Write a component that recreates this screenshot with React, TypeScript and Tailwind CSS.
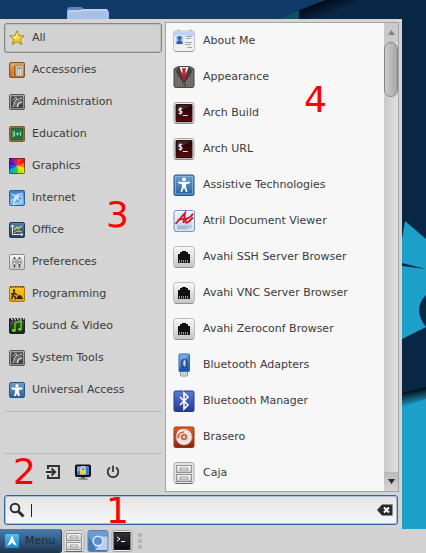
import React from "react";

type Item = { name: string; icon: React.ReactNode };

/* Shared gradients, referenced by every icon on the page. */
function Gradients() {
  const defs: [string, string, string][] = [
    ["gWood", "#d9a266", "#a86f35"],
    ["gSteel", "#8e8e8e", "#3a3a3a"],
    ["gBlue", "#6d9fd2", "#2a5f9a"],
    ["gSky", "#3a7fc4", "#7fbcf0"],
    ["gNavy", "#5c7fa6", "#243e60"],
    ["gLight", "#fafafa", "#c4c4c4"],
    ["gAmber", "#ffc928", "#e39a05"],
    ["gDark", "#555555", "#1c1c1c"],
    ["gStar", "#fff37a", "#e3bd12"],
    ["gRed", "#1c0606", "#5a0a10"],
    ["gBt", "#5a7bd8", "#223a92"],
    ["gOrange", "#e0602a", "#8c2410"],
    ["gUsb", "#5b9be8", "#1450a8"],
    ["gPaper", "#eef4ff", "#b4cbe8"],
    ["gChrome", "#6f9fd8", "#3d73b3"],
    ["gArch", "#55bfea", "#1a86c0"],
    ["gTerm", "#37323e", "#0c0a10"],
  ];
  return (
    <svg className="absolute size-0" aria-hidden="true">
      <defs>
        {defs.map(([id, a, b]) => (
          <linearGradient key={id} id={id} x1="0" y1="0" x2="0" y2="1">
            <stop offset="0" stopColor={a} />
            <stop offset="1" stopColor={b} />
          </linearGradient>
        ))}
      </defs>
    </svg>
  );
}

function Small({ children }: { children: React.ReactNode }) {
  return <svg viewBox="0 0 16 16" className="size-4 shrink-0" aria-hidden="true">{children}</svg>;
}
function Large({ children }: { children: React.ReactNode }) {
  return <svg viewBox="0 0 24 24" className="size-6 shrink-0" aria-hidden="true">{children}</svg>;
}

const Gear = () => (
  <Small>
    <rect x=".5" y=".5" width="15" height="15" rx="1.5" fill="url(#gSteel)" stroke="#5a5a5a" />
    <rect x="1.5" y="1.5" width="13" height="13" fill="none" stroke="#b5b5b5" strokeWidth=".7" />
    <rect x="2.5" y="2.5" width="11" height="11" fill="#3a3a3a" />
    <path d="M13 13V6l-1.500-1.500L10 5.500 8.500 4 7 5l.5 1.500L6 8 4.500 7.500 4 9l1 1-.5 2-1 .5V13z" fill="#6d6d6d" />
    <path d="M13 4.500 10.500 4 9 5.500 7 5 6.500 7 5 8l.5 2L4 11.500V13M3.500 6.500 6 3.500l2 .3" fill="none" stroke="#cfcfcf" />
    <path d="M13 8a4.500 4.500 0 0 0-4.500 5" fill="none" stroke="#dadada" strokeWidth="1.200" />
    <circle cx="11.500" cy="11.500" r="1.200" fill="#2a2a2a" />
  </Small>
);

const categories: Item[] = [
  {
    name: "All",
    icon: (
      <Small>
        <path d="m8 .8 2.100 5h5.200l-4.100 3.500 1.500 5.300L8 11.600l-4.700 3 1.500-5.300L.7 5.800h5.200z" fill="url(#gStar)" stroke="#aa8a12" strokeLinejoin="round" />
        <path d="M8 3 7 7 3.500 7 7 9z" fill="#fffcc8" />
      </Small>
    ),
  },
  {
    name: "Accessories",
    icon: (
      <Small>
        <rect x=".5" y=".5" width="15" height="15" rx="1.500" fill="url(#gWood)" stroke="#875523" />
        <path d="M3 4h2v10H3z" fill="#f58613" />
        <path d="M3 4 4 1.500 5 4z" fill="#f8dfb4" />
        <path d="M5.500 3v11" stroke="#8c5421" strokeWidth=".7" />
        <rect x="7" y="4" width="7" height="10" fill="#e2e2dc" stroke="#8d8d80" strokeWidth=".6" />
        <path d="M8 5h5v2.500H8z" fill="#8dad97" />
        <path d="M8 9h5M8 11h5M8 13h5" stroke="#888" strokeDasharray="1 1" />
      </Small>
    ),
  },
  { name: "Administration", icon: <Gear /> },
  {
    name: "Education",
    icon: (
      <Small>
        <rect x=".5" y=".5" width="15" height="15" rx="1" fill="#c58342" stroke="#8c5420" />
        <rect x="2" y="2" width="12" height="12" fill="#277049" stroke="#174e31" strokeWidth=".7" />
        <path d="M3 6h2.500v4H3M3.500 8h2M7 8h3M8.500 6.500v3M11.500 10V6l-.8.7" fill="none" stroke="#a5eda0" strokeWidth=".9" />
      </Small>
    ),
  },
  {
    name: "Graphics",
    icon: (
      <Small>
        <path d="M8 8V0h5z" fill="#fb3417" />
        <path d="m8 8 5-8h3v5z" fill="#f11a06" />
        <path d="m8 8 8-3v5z" fill="#f57a00" />
        <path d="m8 8 8 2v6z" fill="#ffde00" />
        <path d="m8 8 8 8H9z" fill="#b2e900" />
        <path d="m8 8 1 8H4z" fill="#21c532" />
        <path d="m8 8-4 8H0v-4z" fill="#0caeaa" />
        <path d="m8 8-8 4V7z" fill="#0a4df1" />
        <path d="M8 8 0 7V2z" fill="#3313ba" />
        <path d="M8 8 0 2V0h4z" fill="#760b98" />
        <path d="M8 8 4 0h4z" fill="#d80b65" />
        <rect x=".5" y=".5" width="15" height="15" rx="1" fill="none" stroke="#322038" strokeOpacity=".6" />
      </Small>
    ),
  },
  {
    name: "Internet",
    icon: (
      <Small>
        <rect x=".5" y=".5" width="15" height="15" rx="1.500" fill="url(#gSky)" stroke="#2563a5" />
        <path d="M2 3.500 7 7l6-4M7 7l-3 8M7 7l6 5M2 11l5-4 6-1M4 15l9-3M13 3v9" fill="none" stroke="#e9f5ff" strokeWidth=".8" />
        <path d="m2 3 3 2 3-1 4-1-3 3 1 3-3 1-2 4-1-4 2-3z" fill="#e3f2ff" fillOpacity=".65" />
      </Small>
    ),
  },
  {
    name: "Office",
    icon: (
      <Small>
        <rect x=".5" y=".5" width="15" height="15" rx="1.500" fill="url(#gNavy)" stroke="#213a59" />
        <path d="M3.500 3v9.500H14M2 5l1.500-2L5 5M12 11l2 1.500-2 1.500" fill="none" stroke="#dce7f2" />
        <path d="m5 8 3-3 2 1 3-2" fill="none" stroke="#b6e83c" strokeWidth="1.200" />
        <path d="m5 11 3-2 2 1 3-1M8 6l3 4" fill="none" stroke="#f3bd22" />
      </Small>
    ),
  },
  {
    name: "Preferences",
    icon: (
      <Small>
        <rect x=".5" y=".5" width="15" height="15" rx="1.500" fill="url(#gLight)" stroke="#8c8c8c" />
        <path d="M5.500 3v10.500M10.500 3v10.500" stroke="#333" strokeWidth="1.300" />
        <rect x="4" y="5" width="3" height="6" rx="1" fill="#fff" stroke="#555" strokeWidth=".8" />
        <rect x="9" y="4.500" width="3" height="6" rx="1" fill="#eee" stroke="#555" strokeWidth=".8" />
        <path d="M4 8h3M9 8h3" stroke="#777" />
      </Small>
    ),
  },
  {
    name: "Programming",
    icon: (
      <Small>
        <rect x=".5" y=".5" width="15" height="15" rx="1.500" fill="url(#gAmber)" stroke="#b2780b" />
        <path d="M1 1h14" stroke="#57400a" strokeWidth="1.500" strokeDasharray="1.500 1" />
        <circle cx="5" cy="4.500" r="1.200" fill="#252014" />
        <path d="m4.500 6 2 2 2 1M5 6 4 9.500 2.500 13M4 9.500l2 1 .5 3M3 7v2" fill="none" stroke="#252014" strokeWidth="1.300" />
        <path d="m7 13 1-2 2-2 2 .5 2 3.500z" fill="#252014" />
      </Small>
    ),
  },
  {
    name: "Sound & Video",
    icon: (
      <Small>
        <rect x=".5" y=".5" width="15" height="15" rx="1.500" fill="url(#gDark)" stroke="#202020" />
        <path d="M.5 0h15v3H.5z" fill="#151515" />
        <path d="m2 0 2 2.500M5 0l2 2.500M8 0l2 2.500M11 0l2 2.500M14 0l1 1.500" stroke="#eee" strokeWidth="1.200" />
        <path d="M6 12V5l6-2v8" fill="none" stroke="#4ee513" strokeWidth="1.300" />
        <ellipse cx="4.800" cy="12.300" rx="2" ry="1.600" fill="#4ee513" />
        <ellipse cx="10.800" cy="11.200" rx="1.800" ry="1.500" fill="#4ee513" />
      </Small>
    ),
  },
  { name: "System Tools", icon: <Gear /> },
  {
    name: "Universal Access",
    icon: (
      <Small>
        <rect x=".5" y=".5" width="15" height="15" rx="1.500" fill="url(#gBlue)" stroke="#275687" />
        <circle cx="8" cy="3.700" r="1.600" fill="#fff" />
        <path d="M2.500 5.500h11v1.700L10 8v2l1 4H9l-1-3-1 3H5l1-4V8l-3.500-.8z" fill="#fff" />
      </Small>
    ),
  },
];

const ArchTerminal = () => (
  <Large>
    <rect x="2" y="1.500" width="20" height="21" rx="2.500" fill="#eeeeec" stroke="#a3a3a0" />
    <path d="M3 22h18" stroke="#777" />
    <rect x="4" y="3.500" width="16" height="17" rx=".5" fill="url(#gRed)" stroke="#2b0b0d" />
    <path d="M5 4h14L5 12z" fill="#fff" fillOpacity=".12" />
    <text x="6" y="13" fill="#fff" fontSize="8" fontWeight="bold" fontFamily="DejaVu Sans Mono, monospace">$_</text>
  </Large>
);

const Ethernet = () => (
  <Large>
    <rect x="1.500" y="1.500" width="21" height="21" rx="3" fill="url(#gLight)" stroke="#bcbcbc" />
    <path d="M3 22.500h18" stroke="#929292" />
    <path d="M6 18V9h2V7h2V6h4v1h2v2h2v9z" fill="#111" />
    <path d="M7.500 15v2.500M9.500 15v2.500M11.500 15v2.500M13.500 15v2.500M15.500 15v2.500" stroke="#d9ae1c" strokeWidth=".9" />
  </Large>
);

const Cabinet = () => (
  <Large>
    <rect x="2" y="1.500" width="20" height="21" rx="3" fill="#e4e4e2" stroke="#aaa" />
    <path d="M3.500 22.500h17" stroke="#666" />
    <rect x="4.500" y="4.500" width="15" height="7" fill="url(#gLight)" stroke="#929292" />
    <rect x="4.500" y="13.500" width="15" height="7" fill="url(#gLight)" stroke="#929292" />
    <rect x="8.500" y="7" width="7" height="2" fill="#fff" stroke="#8a8a8a" strokeWidth=".8" />
    <rect x="8.500" y="16" width="7" height="2" fill="#fff" stroke="#8a8a8a" strokeWidth=".8" />
  </Large>
);

const apps: Item[] = [
  {
    name: "About Me",
    icon: (
      <Large>
        <rect x="1.500" y="2" width="21" height="20.500" rx="2.500" fill="#f0f0f0" stroke="#c3c3c3" />
        <path d="M2 3h20v4H2z" fill="#bdd4f6" />
        <path d="M3 22.500h18" stroke="#999" />
        <path d="M5 1.500h3M17 1.500h3" stroke="#b8b8b8" strokeWidth="1.500" />
        <rect x="3.500" y="6.500" width="8" height="9" fill="#a9c8ef" stroke="#dbe7f6" />
        <circle cx="7.500" cy="9" r="2" fill="#335d9d" />
        <path d="M4.500 15c0-5 6-5 6 0z" fill="#2f5c9f" />
        <path d="M14 7.500h6M14 9.500h5M13 13.500h7M13 15.500h6M15 18.500h5" stroke="#9b9b9b" strokeWidth=".9" />
      </Large>
    ),
  },
  {
    name: "Appearance",
    icon: (
      <Large>
        <path d="M2 4q2-2 5-2.500h10Q20 2 22 4v17q0 1.500-2 1.500H4Q2 22.500 2 21z" fill="#66615f" stroke="#4c4846" />
        <path d="M4 5v17M6.500 7v15M9 12v10M15 12v10M17.500 7v15M20 5v17" stroke="#928c88" strokeWidth=".7" />
        <path d="M7 2h10l-5 13z" fill="#f4f4f4" />
        <path d="m7 2-3 5 3 1-1 2 6 8 6-8-1-2 3-1-3-5-5 13z" fill="#49413f" stroke="#2c2625" strokeWidth=".6" />
        <path d="m10 2.500 2 1 2-1-.5 3 .5 6-2 4-2-4 .5-6z" fill="#cb1d28" />
        <circle cx="13" cy="20" r=".8" fill="#292423" />
      </Large>
    ),
  },
  { name: "Arch Build", icon: <ArchTerminal /> },
  { name: "Arch URL", icon: <ArchTerminal /> },
  {
    name: "Assistive Technologies",
    icon: (
      <Large>
        <rect x="2" y="2" width="20" height="20.500" rx="1.500" fill="url(#gBlue)" stroke="#285886" />
        <rect x="3.500" y="3.500" width="17" height="17.500" fill="none" stroke="#8fb5d8" strokeWidth=".8" />
        <circle cx="12" cy="6.500" r="2" fill="#fff" />
        <path d="M6.500 8.500 10 9h4l3.500-.5.5 1.500-4 1.500v2.500l1.500 5H14l-2-4.500L10 19H8.500l1.500-5v-2.500L6 10z" fill="#fff" />
      </Large>
    ),
  },
  {
    name: "Atril Document Viewer",
    icon: (
      <Large>
        <rect x="2" y="1.500" width="20.500" height="21" rx="2" fill="url(#gPaper)" stroke="#7299c8" />
        <path d="M4 3h17v18H4z" fill="none" stroke="#fff" strokeWidth=".8" />
        <path d="M5 17.500h14M5 19.500h10" stroke="#a3b2c9" strokeWidth="1.300" />
        <path d="M3.500 15 13 4l-1.500 10M6 11c4-2 11 1 15-6.500M14.500 9.500c-2 5 0 5 2.500 3l4-4" fill="none" stroke="#d21525" strokeWidth="1.800" />
      </Large>
    ),
  },
  { name: "Avahi SSH Server Browser", icon: <Ethernet /> },
  { name: "Avahi VNC Server Browser", icon: <Ethernet /> },
  { name: "Avahi Zeroconf Browser", icon: <Ethernet /> },
  {
    name: "Bluetooth Adapters",
    icon: (
      <Large>
        <rect x="8.500" y="18" width="7" height="5" rx="1" fill="#e2e2df" stroke="#8d8d8a" />
        <path d="M10.500 20.500h1M13 20.500h1" stroke="#777" />
        <rect x="7" y="1" width="10.500" height="17.500" rx="1" fill="url(#gUsb)" stroke="#2f68ab" />
        <path d="M7.500 1.500h9.500l-5 5-4.500 10z" fill="#fff" fillOpacity=".22" />
        <rect x="9" y="6" width="6.500" height="9" rx="3" fill="#234a82" />
        <path d="m10.500 8.500 3.500 3-1.800 1.800V7l1.800 1.800-3.500 3" fill="none" stroke="#e7f1ff" strokeWidth=".9" />
      </Large>
    ),
  },
  {
    name: "Bluetooth Manager",
    icon: (
      <Large>
        <rect x="2" y="2" width="20" height="20.500" rx="1.500" fill="url(#gBt)" stroke="#253a80" />
        <path d="m8 8 8 8-4 4V4l4 4-8 8" fill="none" stroke="#fff" strokeWidth="1.600" />
      </Large>
    ),
  },
  {
    name: "Brasero",
    icon: (
      <Large>
        <rect x="2" y="2" width="20" height="20.500" rx="1.500" fill="url(#gOrange)" stroke="#9c3515" />
        <circle cx="12" cy="12" r="8" fill="#eee4dd" stroke="#b9aaa0" strokeWidth=".7" />
        <path d="M12 12 5 8a8 8 0 0 1 5-3.700z" fill="#fff" />
        <path d="M6 13c0-4 3-6 6-6" fill="none" stroke="#e74d32" strokeWidth="1.700" />
        <circle cx="12" cy="12" r="3" fill="#d07b55" stroke="#af5b3a" strokeWidth=".7" />
        <circle cx="12" cy="12" r="1" fill="#f8f2ed" />
      </Large>
    ),
  },
  { name: "Caja", icon: <Cabinet /> },
];

function Wallpaper() {
  return (
    <svg viewBox="0 0 426 529" preserveAspectRatio="xMaxYMin slice" className="absolute inset-0 size-full" aria-hidden="true">
      <defs>
        <linearGradient id="shade" gradientUnits="userSpaceOnUse" x1="412" y1="391" x2="415" y2="405">
          <stop offset="0" stopColor="#04111c" />
          <stop offset="1" stopColor="#1c9fc8" />
        </linearGradient>
        <linearGradient id="fold" gradientUnits="userSpaceOnUse" x1="310" y1="5" x2="316" y2="20">
          <stop offset="0" stopColor="#020a14" />
          <stop offset="1" stopColor="#0a2645" />
        </linearGradient>
      </defs>
      <rect width="426" height="529" fill="#0a2645" />
      <path d="M270 19 325 0h35l-45 19z" fill="url(#fold)" />
      <path d="M278 19 299 10v9z" fill="#0b5264" />
      <path d="M0 0h325l-47 19H0z" fill="#103b68" />
      <path d="M402 239 405 221 426 239V327L402 339z" fill="#1c9fc8" />
      <path d="m402 263 24 6-24-3z" fill="#0a2645" />
      <path d="M426 295q-14 14 0 32z" fill="#0a2645" />
      <path d="m402 394 24-6v141h-24z" fill="#1c9fc8" />
      <path d="m402 393 24-6v12l-24 8z" fill="url(#shade)" />
      <path d="M67 19V9l2-2h12l3 2h23l1 3v7z" fill="#6284bf" />
      <path d="M67 19v-7l2-2h11l3-1h24l2 3v7z" fill="#a9bfe5" />
      <path d="M68 11h12l3-1h24" fill="none" stroke="#d3e0f5" />
    </svg>
  );
}

/* Large red number that labels a region of the menu. */
function Callout({ n, place }: { n: number; place: string }) {
  return <span className={`pointer-events-none absolute z-10 text-[36px] leading-9 text-[#ff0000] ${place}`}>{n}</span>;
}

const sessionButton = "flex size-[18px] items-center justify-center";

export default function App() {
  return (
    <div className="flex min-h-screen flex-col bg-[#0a2645] font-['DejaVu_Sans',sans-serif] text-[11px] leading-4 text-[#3b3b3b]">
      <Gradients />
      <main className="relative flex grow flex-col pt-[19px] pr-6">
        <Wallpaper />
        <section aria-label="Application menu" className="relative flex grow flex-col bg-[#d4d4d4] pt-[3px] pr-[3px] pb-1">
          <div className="grid grid-cols-[minmax(0,165fr)_minmax(0,234fr)]">
            <nav aria-label="Categories" className="relative flex flex-col pt-px pr-[3px] pl-1">
              <div className="flex flex-col gap-0.5">
                {categories.map((c, i) => (
                  <button
                    key={c.name}
                    type="button"
                    className={`flex h-[30px] items-center gap-[7px] rounded-[3px] border pl-1 text-left ${
                      i === 0 ? "border-[#858585] bg-[#d2d2d2] shadow-[inset_0_0_0_1px_#bebebe]" : "border-transparent"
                    }`}
                  >
                    {c.icon}
                    <span className="whitespace-nowrap">{c.name}</span>
                  </button>
                ))}
              </div>
              <hr className="mt-1.5 border-[#bababa]" />
              <hr className="mt-[41px] border-[#bababa]" />
              <div className="flex gap-3 pt-[9px] pl-10 text-[#303030]">
                <button type="button" aria-label="Log out" className={sessionButton}>
                  <svg viewBox="0 0 16 16" className="size-4" fill="none" stroke="currentColor" strokeWidth="2">
                    <path d="M3 5V2h11v12H3v-3M1 8h8M6.500 4.500 10 8l-3.500 3.500" />
                  </svg>
                </button>
                <button type="button" aria-label="Lock screen" className={sessionButton}>
                  <svg viewBox="0 0 16 16" className="size-4">
                    <rect x=".5" y="1" width="15" height="11.500" rx="1" fill="#191919" stroke="#080808" />
                    <rect x="2" y="2.500" width="12" height="8.500" fill="#3476cf" />
                    <path d="M2 2.500h12L2 8z" fill="#76a8e6" />
                    <path d="M6 6V4.500a2 2 0 0 1 4 0V6" fill="none" stroke="#eee7bb" strokeWidth="1.200" />
                    <path d="M5 6h6v4.500H5z" fill="#f0ce51" />
                    <path d="M6 13h4v1.500H6z" fill="#555" />
                    <path d="M3.500 15h9" stroke="#777" strokeWidth="1.500" />
                  </svg>
                </button>
                <button type="button" aria-label="Shut down" className={sessionButton}>
                  <svg viewBox="0 0 16 16" className="size-4" fill="none" stroke="currentColor" strokeWidth="1.700">
                    <path d="M5 3.500a5.300 5.300 0 1 0 6 0M8 1.500V8" />
                  </svg>
                </button>
              </div>
              <Callout n={3} place="top-[175px] left-[106px]" />
              <Callout n={2} place="bottom-0.5 left-[13px]" />
            </nav>

            <div className="relative flex border border-[#a3a3a3] bg-[#f7f7f7]">
              <ul className="min-w-0 grow">
                {apps.map((a) => (
                  <li key={a.name}>
                    <button type="button" className="flex h-9 w-full items-center gap-[7px] pl-1.5 text-left">
                      {a.icon}
                      <span className="pb-px whitespace-nowrap">{a.name}</span>
                    </button>
                  </li>
                ))}
              </ul>
              <div className="flex w-[14px] shrink-0 flex-col bg-linear-to-r from-[#c9c9c9] to-[#e0e0e0]">
                <button type="button" aria-label="Scroll up" className="flex h-[19px] items-center justify-center bg-[#cacaca]">
                  <svg viewBox="0 0 7 5" className="h-[5px] w-[7px]"><path d="M0 5 3.500 0 7 5z" fill="#858585" /></svg>
                </button>
                <div className="h-[55px] rounded-full border border-[#858585] bg-linear-to-r from-[#cdcdcd] to-[#a6a6a6]" />
                <div className="grow" />
                <button type="button" aria-label="Scroll down" className="flex h-[19px] items-center justify-center bg-linear-to-b from-[#bababa] to-[#d3d3d3]">
                  <svg viewBox="0 0 7 5" className="h-[5px] w-[7px]"><path d="M0 0h7L3.500 5z" fill="#2b2b2b" /></svg>
                </button>
              </div>
              <Callout n={4} place="top-[59px] left-[138px]" />
            </div>
          </div>

          <div className="relative mt-[3px] mr-px ml-1">
            <label className="flex h-[30px] items-center gap-1.5 rounded-[3px] border border-[#3565a0] bg-linear-to-b from-[#e4e4e4] to-[#f8f8f8] px-1 shadow-[inset_0_0_0_1px_#aebfd3]">
              <svg viewBox="0 0 16 16" className="size-4 shrink-0" fill="none" stroke="#2d2d2d" aria-hidden="true">
                <circle cx="6" cy="6" r="4.300" strokeWidth="2" />
                <path d="m9.500 9.500 5 5" strokeWidth="3" />
              </svg>
              <span className="h-[13px] w-px shrink-0 bg-[#222]" />
              <input type="text" aria-label="Search applications" className="min-w-0 grow bg-transparent outline-none" />
              <button type="button" aria-label="Clear search">
                <svg viewBox="0 0 16 12" className="h-3 w-4">
                  <path d="M0 6 5 .5h10.500v11H5z" fill="#2b2b2b" />
                  <path d="m7 3.500 5 5M12 3.500l-5 5" stroke="#fff" strokeWidth="2" />
                </svg>
              </button>
            </label>
            <Callout n={1} place="-top-0.5 left-[102px]" />
          </div>
        </section>
      </main>

      <footer className="flex h-6 items-center overflow-hidden bg-[#d2d2d2]">
        <button type="button" className="flex h-6 w-[62px] items-center gap-[5px] rounded-r-[3px] border-r border-[#263b52] bg-linear-to-b from-[#4b7eae] via-[#315983] to-[#1e344d] pl-1 text-[#222b38]">
          <svg viewBox="0 0 16 16" className="size-4 shrink-0" aria-hidden="true">
            <path d="M1 1h14v14H1z" fill="url(#gArch)" />
            <path d="M8 2q-2 6-5 11l4-2q1-3 2 0l4 2Q10 8 8 2z" fill="#fff" />
          </svg>
          <span>Menu</span>
        </button>
        <div className="flex">
          <button type="button" aria-label="File manager"><Cabinet /></button>
          <button type="button" aria-label="Web browser">
            <Large>
              <rect x="2" y="1.500" width="20" height="21" rx="2" fill="url(#gChrome)" stroke="#5580b4" />
              <path d="M2.500 2v8L9 21l3-6-5-3 5-5h9.500V2z" fill="#6c9bd0" />
              <path d="M12 7.500h9.500V21H9l5-6z" fill="#b9d1ec" />
              <path d="m2.500 7 7 12-1 3h-6z" fill="#427abd" />
              <circle cx="12" cy="12" r="5.500" fill="#e0ebf7" />
              <circle cx="12" cy="12" r="4" fill="#5c90cc" />
            </Large>
          </button>
          <button type="button" aria-label="Terminal">
            <Large>
              <rect x="2" y="1.500" width="20" height="21" rx="2.500" fill="#eee" stroke="#a0a0a0" />
              <rect x="4" y="3.500" width="16" height="17" fill="url(#gTerm)" stroke="#16131a" />
              <path d="m7 8 3 2-3 2M11 12.500h4" fill="none" stroke="#fff" />
            </Large>
          </button>
        </div>
        <div className="flex flex-col gap-0.5 pl-1" aria-hidden="true">
          <span className="size-1 rounded-[1px] bg-[#b4b4b4]" />
          <span className="size-1 rounded-[1px] bg-[#b4b4b4]" />
          <span className="size-1 rounded-[1px] bg-[#b4b4b4]" />
        </div>
      </footer>
    </div>
  );
}
